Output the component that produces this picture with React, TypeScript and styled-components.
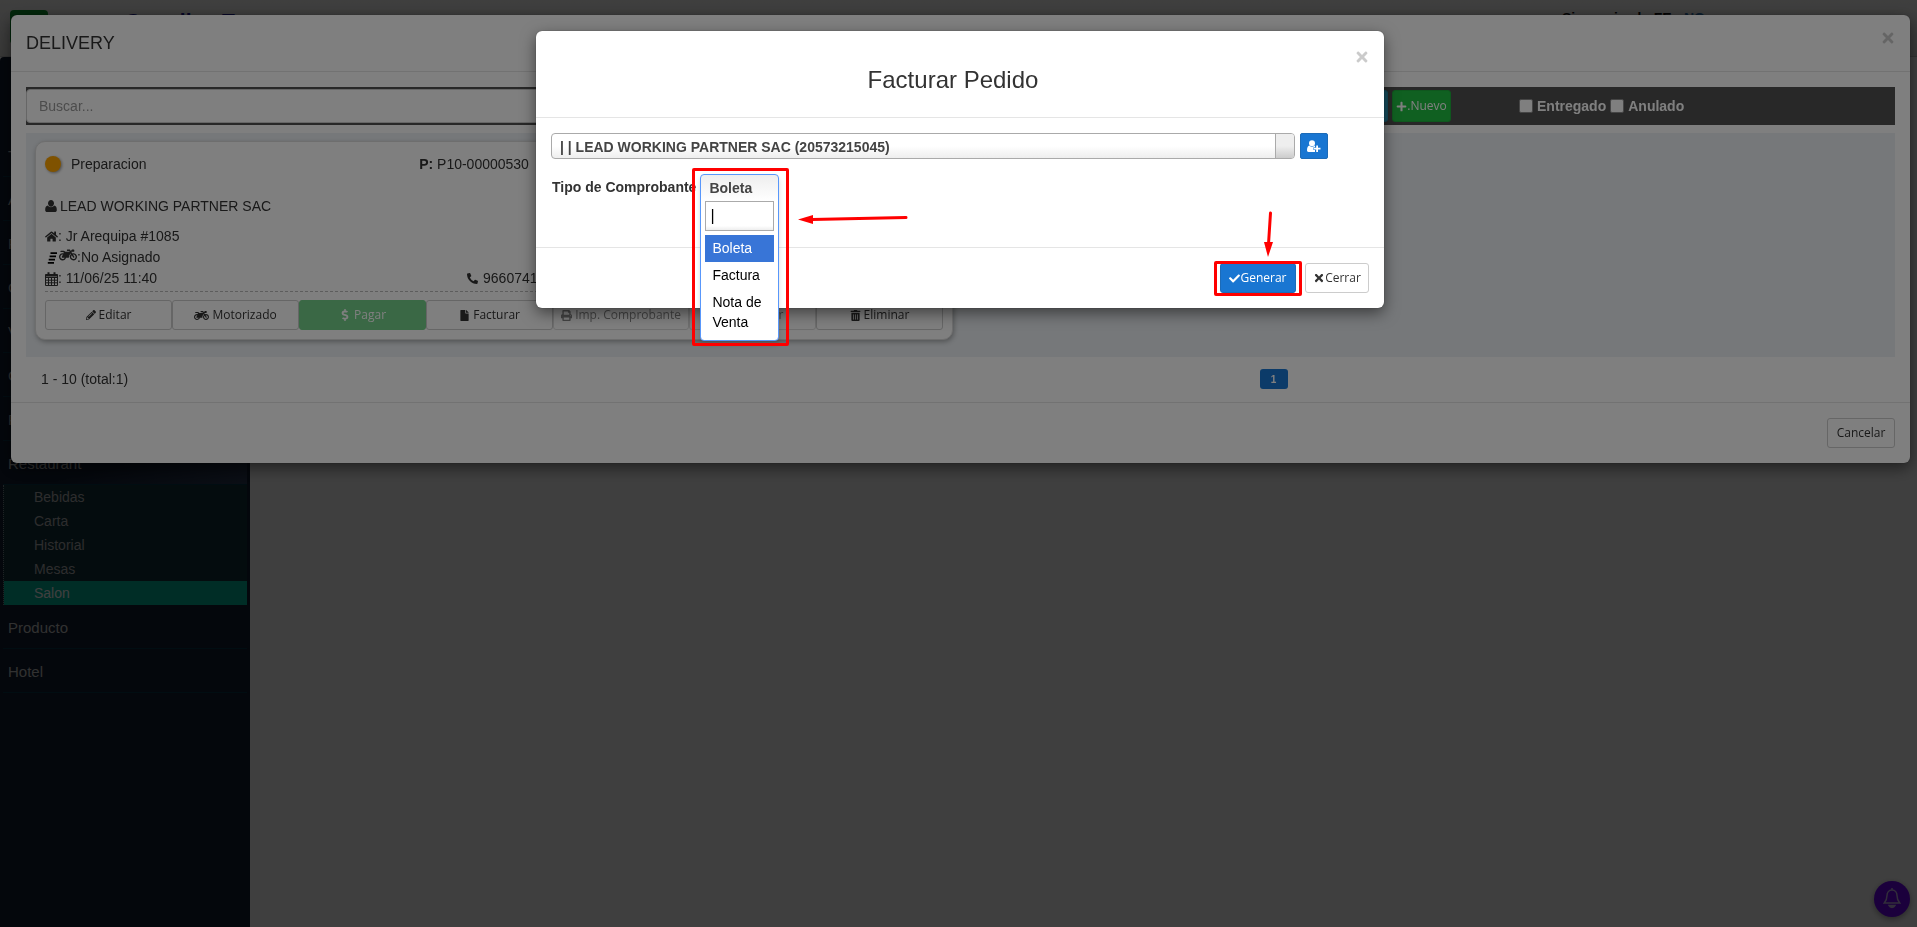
import React from 'react';
import styled, { createGlobalStyle, css } from 'styled-components';
import {
  FaCheck,
  FaDollarSign,
  FaFile,
  FaHome,
  FaMotorcycle,
  FaPencilAlt,
  FaPhoneAlt,
  FaPlus,
  FaPrint,
  FaTimes,
  FaTrashAlt,
} from 'react-icons/fa';

const uiFont = '"Liberation Sans", Arial, sans-serif';
const buttonFont = '"Open Sans", "Noto Sans", sans-serif';

const GlobalStyle = createGlobalStyle`
  * { box-sizing: border-box; }
  body {
    margin: 0;
    overflow: hidden;
    background: #fff;
    color: #333;
    font: 14px/20px ${uiFont};
  }
  button, input, select { font-family: inherit; }
`;

/* ---------- page behind the dialogs ---------- */

const Page = styled.div`
  min-height: 100vh;
  display: flex;
  flex-direction: column;
`;

const TopBar = styled.header`
  height: 57px;
  padding: 0 10px;
  display: flex;
  align-items: flex-start;
  background: linear-gradient(#fdfdfc, #e4e4e1);
  border-bottom: 1px solid #c8c8c8;
`;

const MenuToggle = styled.button`
  width: 38px;
  height: 34px;
  margin: 10px 77px 0 0;
  border: 0;
  border-radius: 4px;
  background: #0a9a2c;
`;

const Company = styled.span`
  padding-top: 11px;
  color: #1b1b9c;
  font-size: 21px;
  font-weight: bold;
`;

const SyncState = styled.span`
  margin: 8px 202px 0 auto;
  color: #111;
  font-weight: bold;

  a {
    color: #337ab7;
    text-decoration: none;
  }
`;

const PageBody = styled.div`
  flex: 1;
  display: flex;
`;

const Sidebar = styled.nav`
  width: 250px;
  padding: 76px 3px 0;
  border-radius: 4px 4px 0 0;
  background: #101c30;
`;

const MenuLink = styled.a<{ $active?: boolean }>`
  display: block;
  height: 44px;
  padding: 0 5px;
  border-bottom: 1px solid #06344a;
  color: #c4c4c4;
  font-size: 15px;
  line-height: 45px;
  text-decoration: none;
  ${(p) => p.$active && css`background: linear-gradient(165deg, #101c30 50%, #2c3a56);`}
`;

const SubMenu = styled.div`
  border-left: 1px dotted #7a8a90;
  background: #10303a;
`;

const SubLink = styled.a<{ $active?: boolean }>`
  display: block;
  padding: 0 30px;
  color: #b4b4b4;
  font-size: 14px;
  line-height: 24px;
  text-decoration: none;
  ${(p) => p.$active && css`
    background: #00b49a;
    color: #fff;
  `}
`;

const BellButton = styled.button`
  position: fixed;
  right: 7px;
  bottom: 10px;
  width: 36px;
  height: 36px;
  padding: 0;
  border: 0;
  border-radius: 50%;
  background: #6c00f0;
  color: #c8b8e8;
  box-shadow: 0 2px 6px rgba(0, 0, 0, 0.4);
`;

/* ---------- dialogs ---------- */

const DialogLayer = styled.div<{ $narrow?: boolean }>`
  position: fixed;
  inset: 0;
  padding: 0 ${(p) => (p.$narrow ? '8px' : '7px')} 0 11px;
  background: rgba(0, 0, 0, 0.5);
`;

const Dialog = styled.section<{ $narrow?: boolean }>`
  max-width: ${(p) => (p.$narrow ? '848px' : 'none')};
  margin: ${(p) => (p.$narrow ? '31px auto 0' : '15px 0 0')};
  border-radius: 6px;
  background: #fff;
  box-shadow: 0 5px 15px rgba(0, 0, 0, 0.5), 0 0 1px rgba(0, 0, 0, 0.5);
`;

const DialogHeader = styled.header`
  display: flex;
  align-items: flex-start;
  padding: 15px;
  border-bottom: 1px solid #e5e5e5;
`;

const DialogTitle = styled.h2`
  flex: 1;
  margin: 0;
  font-size: 18px;
  font-weight: normal;
  line-height: 26px;
`;

const CenteredTitle = styled.h3`
  flex: 1;
  margin: 21px 0 9px;
  font-size: 24px;
  font-weight: normal;
  line-height: 26px;
  text-align: center;
`;

const CloseButton = styled.button<{ $raised?: boolean }>`
  display: flex;
  align-items: center;
  justify-content: center;
  width: 14px;
  height: 22px;
  margin-top: ${(p) => (p.$raised ? '-3px' : '0')};
  padding: 0;
  border: 0;
  background: none;
  color: #000;
  opacity: 0.2;
`;

const DialogBody = styled.div`
  padding: 15px 15px 13px;
`;

const DialogFooter = styled.footer`
  display: flex;
  justify-content: flex-end;
  gap: 9px;
  padding: 15px;
  border-top: 1px solid #e5e5e5;
`;

type Tone = 'plain' | 'primary' | 'success' | 'info' | 'new';

const tones: Record<Tone, { bg: string; border: string; color: string }> = {
  plain: { bg: '#fff', border: '#ccc', color: '#333' },
  primary: { bg: '#1976d2', border: '#1c6bb8', color: '#fff' },
  success: { bg: '#74d08a', border: '#74d08a', color: '#fff' },
  info: { bg: '#2e9fc0', border: '#2790b0', color: '#fff' },
  new: { bg: '#21c043', border: '#1fae3c', color: '#fff' },
};

const Button = styled.button<{ $tone?: Tone; $width?: number; $grow?: boolean; $tall?: boolean }>`
  display: inline-flex;
  align-items: center;
  justify-content: center;
  gap: ${(p) => (p.$grow ? '3px' : '0')};
  height: ${(p) => (p.$tall ? '32px' : '30px')};
  ${(p) => (p.$grow ? css`flex: 1;` : css`width: ${p.$width}px;`)}
  padding: 0 ${(p) => (p.$grow ? '7px' : '0')};
  border: 1px solid ${(p) => tones[p.$tone ?? 'plain'].border};
  border-radius: 3px;
  background: ${(p) => tones[p.$tone ?? 'plain'].bg};
  color: ${(p) => tones[p.$tone ?? 'plain'].color};
  font-family: ${buttonFont};
  font-size: 12px;
  line-height: 18px;
  white-space: nowrap;

  &:disabled {
    border-color: #ddd;
    color: #888;
  }
`;

/* ---------- delivery dialog ---------- */

const Toolbar = styled.div`
  display: flex;
  align-items: center;
  gap: 4px;
  padding: 2px 0;
  background: #505050;
`;

const SearchInput = styled.input`
  flex: 1;
  height: 34px;
  padding: 0 12px;
  border: 1px solid #ccc;
  border-radius: 4px;
  background: #fff;
  font-size: 14px;

  &::placeholder {
    color: #999;
  }
`;

const Filters = styled.div`
  display: flex;
  align-items: center;
  gap: 4px;
  width: 440px;
  padding-left: 64px;
  color: #fff;
  font-weight: bold;

  label {
    display: flex;
    align-items: center;
    gap: 4px;
  }
`;

const CheckBox = styled.input`
  appearance: none;
  width: 14px;
  height: 14px;
  margin: 0;
  border: 1px solid #8a8a8a;
  border-radius: 2px;
  background: #fff;
`;

const Orders = styled.div`
  display: grid;
  grid-template-columns: 1fr 1fr;
  gap: 15px;
  margin-top: 8px;
  padding: 8px 9px 17px;
  background: #ecf0f4;
`;

const Card = styled.article`
  padding: 12px 9px 9px;
  border: 1px solid #ddd;
  border-radius: 10px;
  background: #fff;
  box-shadow: 1px 2px 5px rgba(0, 0, 0, 0.3);
`;

const CardTop = styled.div`
  display: grid;
  grid-template-columns: 5fr 7fr;
  margin-bottom: 22px;
`;

const Status = styled.span`
  display: flex;
  align-items: center;
  gap: 10px;
`;

const Dot = styled.i`
  width: 16px;
  height: 16px;
  border-radius: 50%;
  background: orange;
  box-shadow: 1px 1px 3px rgba(0, 0, 0, 0.4);
`;

const Client = styled.p`
  display: flex;
  align-items: center;
  gap: 3px;
  margin: 0 0 10px;
`;

const Detail = styled.div`
  display: grid;
  grid-template-columns: 47% 53%;
  line-height: 21px;

  span {
    display: flex;
    align-items: center;
  }
`;

const PhoneNumber = styled.span`
  gap: 5px;
`;

const Raised = styled.i`
  display: flex;
  height: 21px;
  padding-bottom: 6px;
  align-items: center;
`;

const Actions = styled.div`
  display: flex;
  margin-top: 2px;
  padding-top: 8px;
  border-top: 1px dashed #bbb;
`;

const PagerRow = styled.div`
  display: grid;
  grid-template-columns: 66% 1fr;
  align-items: center;
  padding: 12px 0 0;
`;

const Range = styled.span`
  padding-left: 15px;
`;

const PageButton = styled.button`
  width: 28px;
  height: 20px;
  padding: 0;
  border: 0;
  border-radius: 3px;
  background: #1976d2;
  color: #fff;
  font-size: 10px;
  font-weight: bold;
`;

/* ---------- invoice dialog ---------- */

const CustomerRow = styled.div`
  display: flex;
  gap: 5px;
  padding-right: 41px;
`;

const CustomerField = styled.div`
  flex: 1;
  display: flex;
  height: 26px;
  overflow: hidden;
  border: 1px solid #aaa;
  border-radius: 4px;
  background: linear-gradient(#fff 50%, #eee);
`;

const CustomerSelect = styled.select`
  flex: 1;
  appearance: none;
  padding: 2px 8px 0;
  border: 0;
  background: none;
  color: #444;
  font-size: 14px;
  font-weight: bold;
`;

const SelectArrow = styled.span`
  width: 19px;
  border-left: 1px solid #aaa;
  background: linear-gradient(#eee 50%, #ccc);
`;

const AddCustomer = styled.button`
  display: flex;
  align-items: center;
  justify-content: center;
  width: 28px;
  height: 26px;
  padding: 0;
  border: 1px solid #1c6bb8;
  border-radius: 2px;
  background: #1976d2;
  color: #fff;
`;

const VoucherRow = styled.div`
  display: flex;
  gap: 4px;
  height: 75px;
  padding: 15px 0 0 1px;
`;

const VoucherLabel = styled.label`
  line-height: 26px;
  font-weight: bold;
`;

const VoucherPicker = styled.div`
  position: relative;
  width: 79px;
`;

const Picker = styled.div`
  position: absolute;
  top: 0;
  left: 0;
  width: 79px;
  padding: 0 4px 4px;
  border: 1px solid #5897fb;
  border-radius: 4px;
  background: linear-gradient(#eee, #fff 26px);
  box-shadow: 0 4px 5px rgba(0, 0, 0, 0.15);
`;

const PickerValue = styled.button`
  display: block;
  width: 100%;
  height: 26px;
  padding: 0 4px;
  border: 0;
  background: none;
  color: #444;
  font-size: 14px;
  font-weight: bold;
  text-align: left;
`;

const PickerSearch = styled.input`
  display: block;
  width: 100%;
  height: 30px;
  margin-bottom: 4px;
  padding: 0 4px;
  border: 1px solid #aaa;
  background: linear-gradient(#fff 85%, #eee);
  color: #000;
  font-size: 16px;
  outline: 0;
`;

const Options = styled.ul`
  margin: 0;
  padding: 0;
  list-style: none;
`;

const Option = styled.li<{ $active?: boolean }>`
  padding: 3px 7px 4px;
  background: ${(p) => (p.$active ? '#3875d7' : 'transparent')};
  color: ${(p) => (p.$active ? '#fff' : '#000')};
`;

/* ---------- red marks laid over the dialog ---------- */

const mark = css`
  position: absolute;
  border: 3px solid #f00;
  border-radius: 2px;
  pointer-events: none;
`;

const PickerMark = styled.div`
  ${mark}
  inset: -6px -10px -6px -8px;
`;

const PickerMarked = styled.div`
  position: absolute;
  inset: 0 0 auto;
  height: 166px;
`;

const GenerateWrap = styled.div`
  position: relative;
`;

const GenerateMark = styled.div`
  ${mark}
  inset: -2px -6px -3px;
`;

const PointLeft = styled.svg`
  position: absolute;
  top: 40px;
  left: 98px;
`;

const PointDown = styled.svg`
  position: absolute;
  top: -52px;
  left: 43px;
`;

/* ---------- drawings ---------- */

const UserIcon = ({ size = 12 }: { size?: number }) => (
  <svg width={size} height={size} viewBox="0 0 12 12" fill="currentColor" aria-hidden="true">
    <path d="M6 0C7.7 0 9 1.4 9 3.3S7.7 6.7 6 6.7 3 5.200 3 3.300 4.300 0 6 0z" />
    <path d="M2.900 5.600C3.700 6.700 4.700 7.300 6 7.300s2.300-.6 3.100-1.700C11 5.800 11.800 7.400 11.800 9.900 11.800 11.300 11 12 9.800 12H2.200C1 12 .2 11.300.2 9.900.2 7.400 1 5.800 2.900 5.600z" />
  </svg>
);

const UserPlusIcon = () => (
  <svg width="14" height="12" viewBox="0 0 14 12" fill="currentColor" aria-hidden="true">
    <circle cx="5" cy="3.300" r="3" />
    <path d="M2.500 5.500C3.300 6.300 4 6.700 5 6.700s1.700-.4 2.500-1.200l.5.2v1.600H6.500v2.700H8V12H1.500C.6 12 0 11.300 0 10.300 0 7.500.8 5.800 2.500 5.500z" />
    <path d="M9.200 5.500h1.800v2.300h2.500v1.700H11V12H9.200V9.500H7V7.800h2.200z" />
  </svg>
);

const LinesIcon = () => (
  <svg width="14" height="12" viewBox="0 0 14 12" stroke="#000" strokeWidth="1.800" aria-hidden="true">
    <path d="M5.500 1.200H12M4.600 4.400H11M3.700 7.600H10M2.800 10.800H9" />
  </svg>
);

const CalendarIcon = () => (
  <svg width="13" height="14" viewBox="0 0 13 14" fill="none" stroke="currentColor" aria-hidden="true">
    <path d="M.5 2.500h12v11H.5zM.5 5.500h12M.5 8.200h12M.5 10.800h12M3.500 5.500v8M6.500 5.500v8M9.500 5.500v8" />
    <path d="M.5 3.500h12" strokeWidth="2" />
    <path d="M3.500.3v3.400M9.500.3v3.400" strokeWidth="2" />
  </svg>
);

const BellIcon = () => (
  <svg width="18" height="22" viewBox="0 0 18 22" fill="none" stroke="currentColor" strokeWidth="1.500" aria-hidden="true">
    <path d="M9 1v2M9 3C5.800 3 4 5.500 4 8.500c0 4-1 5.500-2.700 7.500h15.400C15 14 14 12.500 14 8.500 14 5.500 12.200 3 9 3z" />
    <path d="M6 18.500c.6 1.300 1.600 2 3 2s2.400-.7 3-2z" fill="currentColor" />
  </svg>
);

const menu = ['Tablero', 'Almacen', 'Proveedor', 'Compras', 'Ventas', 'Caja', 'Reportes'];
const restaurantMenu = ['Bebidas', 'Carta', 'Historial', 'Mesas', 'Salon'];
const vouchers = ['Boleta', 'Factura', 'Nota de Venta'];

export default function App() {
  return (
    <>
      <GlobalStyle />
      <Page>
        <TopBar>
          <MenuToggle aria-label="Menu" />
          <Company>Carrellos T</Company>
          <SyncState>
            Sincronizado FE : <a href="#sync">NO</a>
          </SyncState>
        </TopBar>
        <PageBody>
          <Sidebar>
            {menu.map((item) => (
              <MenuLink key={item} href="#menu">{item}</MenuLink>
            ))}
            <MenuLink href="#restaurant" $active>Restaurant</MenuLink>
            <SubMenu>
              {restaurantMenu.map((item) => (
                <SubLink key={item} href="#restaurant" $active={item === 'Salon'}>{item}</SubLink>
              ))}
            </SubMenu>
            <MenuLink href="#producto">Producto</MenuLink>
            <MenuLink href="#hotel">Hotel</MenuLink>
          </Sidebar>
        </PageBody>
        <BellButton aria-label="Notificaciones"><BellIcon /></BellButton>
      </Page>

      <DialogLayer>
        <Dialog role="dialog" aria-labelledby="delivery-title">
          <DialogHeader>
            <DialogTitle id="delivery-title">DELIVERY</DialogTitle>
            <CloseButton $raised aria-label="Cerrar"><FaTimes size={16} /></CloseButton>
          </DialogHeader>
          <DialogBody>
            <Toolbar>
              <SearchInput placeholder="Buscar..." aria-label="Buscar" />
              <Button $tone="info" $width={70} $tall aria-label="Buscar" />
              <Button $tone="new" $width={59} $tall><FaPlus size={11} />.Nuevo</Button>
              <Filters>
                <label><CheckBox type="checkbox" />Entregado</label>
                <label><CheckBox type="checkbox" />Anulado</label>
              </Filters>
            </Toolbar>
            <Orders>
              <Card>
                <CardTop>
                  <Status><Dot />Preparacion</Status>
                  <span><b>P:</b> P10-00000530</span>
                </CardTop>
                <Client><UserIcon />LEAD WORKING PARTNER SAC</Client>
                <Detail><span><FaHome size={13} />:&nbsp;Jr Arequipa #1085</span></Detail>
                <Detail>
                  <span><LinesIcon /><Raised><FaMotorcycle size={18} /></Raised>:No Asignado</span>
                </Detail>
                <Detail>
                  <span><CalendarIcon />:&nbsp;11/06/25 11:40</span>
                  <PhoneNumber><FaPhoneAlt size={11} />9660741</PhoneNumber>
                </Detail>
                <Actions>
                  <Button $grow><FaPencilAlt size={10} />Editar</Button>
                  <Button $grow><FaMotorcycle size={15} />Motorizado</Button>
                  <Button $grow $tone="success"><FaDollarSign size={12} />Pagar</Button>
                  <Button $grow><FaFile size={11} />Facturar</Button>
                  <Button $grow disabled><FaPrint size={11} />Imp. Comprobante</Button>
                  <Button $grow disabled><FaCheck size={11} />Entregar</Button>
                  <Button $grow><FaTrashAlt size={11} />Eliminar</Button>
                </Actions>
              </Card>
            </Orders>
            <PagerRow>
              <Range>1 - 10 (total:1)</Range>
              <PageButton>1</PageButton>
            </PagerRow>
          </DialogBody>
          <DialogFooter>
            <Button $width={68}>Cancelar</Button>
          </DialogFooter>
        </Dialog>
      </DialogLayer>

      <DialogLayer $narrow>
        <Dialog $narrow role="dialog" aria-labelledby="invoice-title">
          <DialogHeader>
            <CenteredTitle id="invoice-title">Facturar Pedido</CenteredTitle>
            <CloseButton aria-label="Cerrar"><FaTimes size={16} /></CloseButton>
          </DialogHeader>
          <DialogBody>
            <CustomerRow>
              <CustomerField>
                <CustomerSelect aria-label="Cliente">
                  <option>| | LEAD WORKING PARTNER SAC (20573215045)</option>
                </CustomerSelect>
                <SelectArrow />
              </CustomerField>
              <AddCustomer aria-label="Nuevo cliente"><UserPlusIcon /></AddCustomer>
            </CustomerRow>
            <VoucherRow>
              <VoucherLabel htmlFor="voucher">Tipo de Comprobante</VoucherLabel>
              <VoucherPicker>
                <Picker>
                  <PickerValue id="voucher">Boleta</PickerValue>
                  <PickerSearch defaultValue="|" aria-label="Filtrar" />
                  <Options role="listbox">
                    {vouchers.map((voucher) => (
                      <Option key={voucher} role="option" $active={voucher === 'Boleta'}>{voucher}</Option>
                    ))}
                  </Options>
                </Picker>
                <PickerMarked><PickerMark /></PickerMarked>
                <PointLeft width="110" height="12" viewBox="0 0 110 12">
                  <path d="M14 5.500L108 3.500" stroke="#f00" strokeWidth="3" strokeLinecap="round" />
                  <path d="M0 5.500L15 1v9z" fill="#f00" />
                </PointLeft>
              </VoucherPicker>
            </VoucherRow>
          </DialogBody>
          <DialogFooter>
            <GenerateWrap>
              <Button $tone="primary" $width={76}><FaCheck size={11} />Generar</Button>
              <GenerateMark />
              <PointDown width="12" height="48" viewBox="0 0 12 48">
                <path d="M7.500 2L5.500 33" stroke="#f00" strokeWidth="3" strokeLinecap="round" />
                <path d="M1 31h9L5 46z" fill="#f00" />
              </PointDown>
            </GenerateWrap>
            <Button $width={64}><FaTimes size={12} />Cerrar</Button>
          </DialogFooter>
        </Dialog>
      </DialogLayer>
    </>
  );
}
